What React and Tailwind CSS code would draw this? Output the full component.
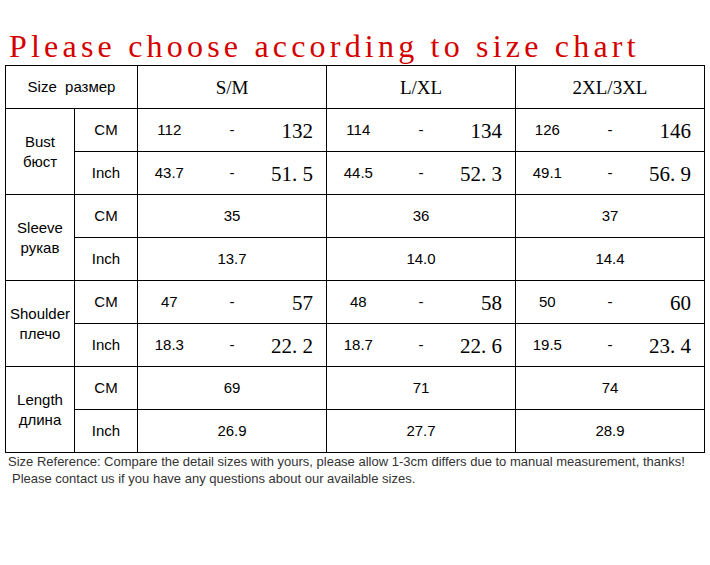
import React from "react";

const SANS = "font-['Liberation_Sans',Arial,sans-serif]";
const SERIF = "font-['Liberation_Serif','Times_New_Roman',serif]";

const Cell = ({ className = "", children }) => (
  <div className={`bg-white flex items-center justify-center text-black ${className}`}>
    {children}
  </div>
);

const Range = ({ a, b }) => (
  <div className={`bg-white grid grid-cols-3 items-center text-[15px] text-black ${SANS}`}>
    <span className="text-center">{a}</span>
    <span className="text-center">-</span>
    <span className={`text-right pr-[13px] pt-[4px] text-[21px] whitespace-pre ${SERIF}`}>{b}</span>
  </div>
);

const Single = ({ v }) => <Cell className={`text-[15px] ${SANS}`}>{v}</Cell>;

const Unit = ({ t }) => <Cell className={`text-[15px] ${SANS}`}>{t}</Cell>;

const Label = ({ en, ru }) => (
  <Cell className={`row-span-2 flex-col text-[15px] leading-[20px] text-center ${SANS}`}>
    <span>{en}</span>
    <span>{ru}</span>
  </Cell>
);

const Head = ({ t }) => <Cell className={`text-[19px] pt-[3px] ${SERIF}`}>{t}</Cell>;

const groups = [
  {
    en: "Bust",
    ru: "бюст",
    cm: [["112", "132"], ["114", "134"], ["126", "146"]],
    inch: [["43.7", "51. 5"], ["44.5", "52. 3"], ["49.1", "56. 9"]],
  },
  { en: "Sleeve", ru: "рукав", cm: ["35", "36", "37"], inch: ["13.7", "14.0", "14.4"] },
  {
    en: "Shoulder",
    ru: "плечо",
    cm: [["47", "57"], ["48", "58"], ["50", "60"]],
    inch: [["18.3", "22. 2"], ["18.7", "22. 6"], ["19.5", "23. 4"]],
  },
  { en: "Length", ru: "длина", cm: ["69", "71", "74"], inch: ["26.9", "27.7", "28.9"] },
];

const Val = ({ v }) => (Array.isArray(v) ? <Range a={v[0]} b={v[1]} /> : <Single v={v} />);

export default function App() {
  return (
    <div className="w-[710px] h-[565px] bg-white overflow-hidden">
      <div className="h-[65px] pt-[28px] pl-[9px]">
        <div className={`text-[32px] leading-[36px] tracking-[4.2px] text-[#d40000] whitespace-nowrap ${SERIF}`}>
          Please choose according to size chart
        </div>
      </div>

      <div className="ml-[5px] w-[700px] bg-black p-[1px] grid gap-[1px] grid-cols-[68px_62px_188px_188px_188px] grid-rows-[repeat(9,42px)]">
        <Cell className={`col-span-2 text-[15px] whitespace-pre ${SANS}`}>Size  размер</Cell>
        <Head t="S/M" />
        <Head t="L/XL" />
        <Head t="2XL/3XL" />

        {groups.map((g) => (
          <React.Fragment key={g.en}>
            <Label en={g.en} ru={g.ru} />
            <Unit t="CM" />
            {g.cm.map((v, i) => (
              <Val key={"c" + i} v={v} />
            ))}
            <Unit t="Inch" />
            {g.inch.map((v, i) => (
              <Val key={"i" + i} v={v} />
            ))}
          </React.Fragment>
        ))}
      </div>

      <div className={`pl-[8px] text-[13px] leading-[17px] text-[#333] ${SANS}`}>
        <div className="whitespace-nowrap">
          Size Reference: Compare the detail sizes with yours, please allow 1-3cm differs due to manual measurement, thanks!
        </div>
        <div className="whitespace-nowrap pl-[4px]">
          Please contact us if you have any questions about our available sizes.
        </div>
      </div>
    </div>
  );
}
